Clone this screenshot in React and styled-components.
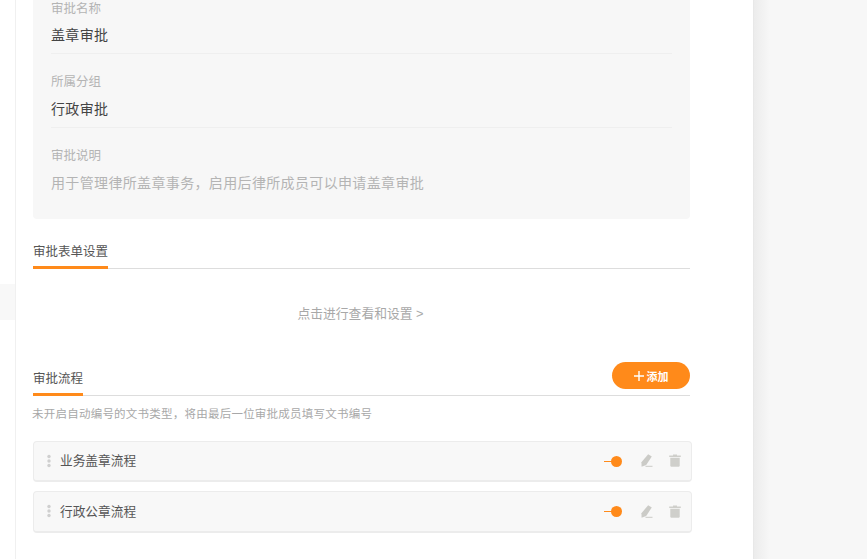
import React from "react";
import styled, { createGlobalStyle } from "styled-components";

const infoData = [
  { id: 1, label: "审批名称", value: "盖章审批" },
  { id: 2, label: "所属分组", value: "行政审批" },
];

const flowsData = [
  { id: 1, name: "业务盖章流程" },
  { id: 2, name: "行政公章流程" },
];

function GripIcon() {
  return (
    <svg width="4" height="14" viewBox="0 0 4 14">
      <circle cx="2" cy="2.5" r="1.7" fill="#cfcfcf" />
      <circle cx="2" cy="7" r="1.7" fill="#cfcfcf" />
      <circle cx="2" cy="11.5" r="1.7" fill="#cfcfcf" />
    </svg>
  );
}

function PenIcon() {
  return (
    <svg width="12" height="13" viewBox="0 0 12 13">
      <path d="M7.2 0.2 L10.8 2.4 L5.2 11 L0.6 12.8 L0.4 8.2 Z" fill="#cbcbc7" />
      <rect x="4.5" y="11.8" width="7" height="1" fill="#cbcbc7" />
    </svg>
  );
}

function TrashIcon() {
  return (
    <svg width="12" height="13" viewBox="0 0 12 13">
      <path d="M4 0.4 H8 V1.6 H11.8 V3 H0.2 V1.6 H4 Z" fill="#cfcfcb" />
      <path d="M1.3 3.8 H10.7 V11.6 Q10.7 12.8 9.5 12.8 H2.5 Q1.3 12.8 1.3 11.6 Z" fill="#cfcfcb" />
    </svg>
  );
}

export default function App() {
  return (
    <Page>
      <GlobalStyle />
      <Sidebar>
        <SideItem />
      </Sidebar>
      <Panel>
        <InfoCard>
          {infoData.map((info) => (
            <InfoRow key={info.id}>
              <InfoLabel>{info.label}</InfoLabel>
              <InfoValue>{info.value}</InfoValue>
            </InfoRow>
          ))}
          <InfoLast>
            <InfoLabel>审批说明</InfoLabel>
            <InfoNote>用于管理律所盖章事务，启用后律所成员可以申请盖章审批</InfoNote>
          </InfoLast>
        </InfoCard>

        <SectionHead>
          <SectionTitle>审批表单设置</SectionTitle>
        </SectionHead>
        <SettingLink>点击进行查看和设置 &gt;</SettingLink>

        <FlowHead>
          <SectionTitle>审批流程</SectionTitle>
          <AddButton>
            <svg width="10" height="10" viewBox="0 0 10 10">
              <path d="M5 0 V10 M0 5 H10" stroke="#fff" strokeWidth="1.4" />
            </svg>
            添加
          </AddButton>
        </FlowHead>
        <Hint>未开启自动编号的文书类型，将由最后一位审批成员填写文书编号</Hint>

        <FlowList>
          {flowsData.map((flow) => (
            <FlowRow key={flow.id}>
              <GripIcon />
              <FlowName>{flow.name}</FlowName>
              <Toggle />
              <ActionIcon>
                <PenIcon />
              </ActionIcon>
              <ActionIcon>
                <TrashIcon />
              </ActionIcon>
            </FlowRow>
          ))}
        </FlowList>
      </Panel>
      <Backdrop />
    </Page>
  );
}

const GlobalStyle = createGlobalStyle`
  html, body {
    margin: 0;
    padding: 0;
    height: 100%;
    overflow: hidden;
    background: #ffffff;
    font-family: "Liberation Sans", "Noto Sans CJK SC", sans-serif;
  }
`;

const Page = styled.div`
  display: flex;
  width: 867px;
  height: 559px;
  overflow: hidden;
`;
const Sidebar = styled.div`
  width: 15px;
  flex-shrink: 0;
  padding-top: 284px;
  box-sizing: border-box;
`;
const SideItem = styled.div`
  height: 36px;
  background-color: #f8f8f8;
`;
const Panel = styled.div`
  width: 738px;
  flex-shrink: 0;
  box-sizing: border-box;
  padding-left: 17px;
  padding-right: 61px;
  background-color: #ffffff;
  border-left: 1px solid #f0f0f0;
`;
const Backdrop = styled.div`
  flex: 1;
  background-color: #f7f7f7;
  border-left: 1px solid #e8e8e8;
  background-image: linear-gradient(to right, #ececec, #f7f7f7 16px);
`;
const InfoCard = styled.div`
  width: 657px;
  height: 219px;
  box-sizing: border-box;
  padding: 0 18px;
  background-color: #f7f7f7;
  border-radius: 0 0 4px 4px;
`;
const InfoRow = styled.div`
  height: 74px;
  box-sizing: border-box;
  padding-top: 20px;
  border-bottom: 1px solid #efefef;
  &:first-child {
    height: 54px;
    padding-top: 1px;
  }
`;
const InfoLast = styled.div`
  padding-top: 20px;
`;
const InfoLabel = styled.div`
  font-size: 12.5px;
  line-height: 16px;
  color: #b4b4b4;
`;
const InfoValue = styled.div`
  margin-top: 10px;
  font-size: 14px;
  letter-spacing: 0.35px;
  line-height: 18px;
  color: #444444;
  ${InfoRow}:first-child & {
    margin-top: 9px;
  }
`;
const InfoNote = styled.div`
  margin-top: 10px;
  font-size: 14px;
  letter-spacing: 0.35px;
  line-height: 18px;
  color: #b4b4b4;
`;
const SectionHead = styled.div`
  width: 657px;
  height: 50px;
  box-sizing: border-box;
  border-bottom: 1px solid #dddddd;
  display: flex;
  align-items: flex-end;
`;
const SectionTitle = styled.div`
  height: 27px;
  margin-bottom: -1px;
  padding-top: 2px;
  box-sizing: border-box;
  border-bottom: 3px solid #ff8a1a;
  font-size: 12.5px;
  line-height: 16px;
  color: #555555;
`;
const SettingLink = styled.div`
  height: 93px;
  box-sizing: border-box;
  padding: 36px 2px 0 0;
  width: 657px;
  text-align: center;
  font-size: 12.8px;
  line-height: 18px;
  color: #a8a8a8;
`;
const FlowHead = styled.div`
  width: 657px;
  height: 34px;
  box-sizing: border-box;
  border-bottom: 1px solid #dddddd;
  display: flex;
  align-items: flex-end;
  justify-content: space-between;
`;
const AddButton = styled.button`
  width: 78px;
  height: 27px;
  margin-bottom: 6px;
  padding: 0;
  border: none;
  border-radius: 14px;
  background-color: #ff8a1a;
  color: #ffffff;
  font-family: inherit;
  font-size: 11px;
  font-weight: bold;
  display: flex;
  align-items: center;
  justify-content: center;
  gap: 3px;
  cursor: pointer;
`;
const Hint = styled.div`
  margin-top: 10px;
  margin-left: -1px;
  font-size: 11.5px;
  letter-spacing: 0.23px;
  line-height: 16px;
  color: #a8a8a8;
`;
const FlowList = styled.div`
  margin-top: 18.6px;
  width: 659px;
  display: flex;
  flex-direction: column;
  gap: 8.7px;
`;
const FlowRow = styled.div`
  height: 41.7px;
  box-sizing: border-box;
  padding: 0 10px 0 13px;
  display: flex;
  align-items: center;
  background-color: #f8f8f8;
  border: 1px solid #ececec;
  border-bottom-width: 2px;
  border-radius: 4px;
`;
const FlowName = styled.div`
  flex: 1;
  margin-left: 9px;
  margin-top: -2px;
  font-size: 12.7px;
  color: #555555;
`;
const Toggle = styled.div`
  position: relative;
  top: 1px;
  width: 18px;
  height: 12px;
  margin-right: 19px;
  &::before {
    content: "";
    position: absolute;
    left: 0;
    top: 5px;
    width: 10px;
    height: 1px;
    background-color: #ff8a1a;
  }
  &::after {
    content: "";
    position: absolute;
    right: 0;
    top: 0;
    width: 11px;
    height: 11px;
    border-radius: 50%;
    background-color: #ff8a1a;
  }
`;
const ActionIcon = styled.div`
  width: 12px;
  height: 13px;
  display: flex;
  & + & {
    margin-left: 16px;
  }
`;
